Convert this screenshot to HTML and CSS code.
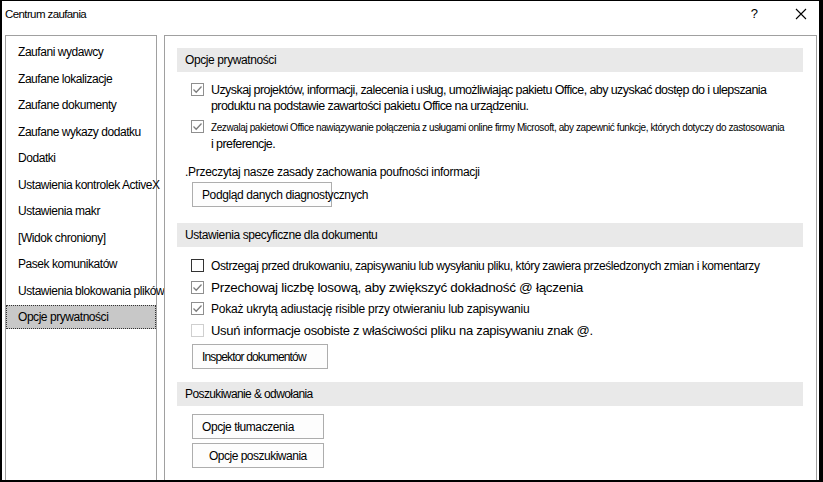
FILE: index.html
```html
<!DOCTYPE html>
<html lang="pl">
<head>
    <meta charset="UTF-8">
    <meta name="viewport" content="width=device-width, initial-scale=1.0">
    <title>Centrum zaufania</title>
    <link rel="stylesheet" href="styles.css">
</head>
<body>
    <div class="window">
        <div class="titlebar">
            <span class="title">Centrum zaufania</span>
            <span class="help">?</span>
            <svg class="close" width="12" height="12" viewBox="0 0 12 12" aria-label="Zamknij">
                <path d="M1 1L11 11M11 1L1 11" stroke="#000" stroke-width="1.1" fill="none"/>
            </svg>
        </div>

        <div class="content">
            <!-- Category list -->
            <ul class="nav">
                <li>Zaufani wydawcy</li>
                <li>Zaufane lokalizacje</li>
                <li>Zaufane dokumenty</li>
                <li>Zaufane wykazy dodatku</li>
                <li>Dodatki</li>
                <li>Ustawienia kontrolek ActiveX</li>
                <li>Ustawienia makr</li>
                <li>[Widok chroniony]</li>
                <li>Pasek komunikatów</li>
                <li>Ustawienia blokowania plików</li>
                <li class="selected">Opcje prywatności</li>
            </ul>

            <!-- Settings pane -->
            <div class="pane">
                <div class="section-title">Opcje prywatności</div>

                <div class="option option-first">
                    <span class="check checked"><svg width="11" height="11" viewBox="0 0 11 11"><path d="M1.5 5.5L4.2 8.2L9.5 2.5" stroke="#7d7d7d" stroke-width="1.3" fill="none"/></svg></span>
                    <span class="option-text">Uzyskaj projektów, informacji, zalecenia i usług, umożliwiając pakietu Office, aby uzyskać dostęp do i ulepszania<br>produktu na podstawie zawartości pakietu Office na urządzeniu.</span>
                </div>
                <div class="option option-second">
                    <span class="check checked"><svg width="11" height="11" viewBox="0 0 11 11"><path d="M1.5 5.5L4.2 8.2L9.5 2.5" stroke="#7d7d7d" stroke-width="1.3" fill="none"/></svg></span>
                    <span class="option-text"><span class="tiny">Zezwalaj pakietowi Office nawiązywanie połączenia z usługami online firmy Microsoft, aby zapewnić funkcje, których dotyczy do zastosowania</span><br>i preferencje.</span>
                </div>

                <p class="privacy-link">.Przeczytaj nasze zasady zachowania poufności informacji</p>
                <button class="btn btn-diag">Podgląd danych diagnostycznych</button>

                <div class="section-title section-doc">Ustawienia specyficzne dla dokumentu</div>

                <div class="row row-first">
                    <span class="check"></span>
                    <span class="row-text warn">Ostrzegaj przed drukowaniu, zapisywaniu lub wysyłaniu pliku, który zawiera prześledzonych zmian i komentarzy</span>
                </div>
                <div class="row">
                    <span class="check checked"><svg width="11" height="11" viewBox="0 0 11 11"><path d="M1.5 5.5L4.2 8.2L9.5 2.5" stroke="#7d7d7d" stroke-width="1.3" fill="none"/></svg></span>
                    <span class="row-text large">Przechowaj liczbę losową, aby zwiększyć dokładność @ łączenia</span>
                </div>
                <div class="row">
                    <span class="check checked"><svg width="11" height="11" viewBox="0 0 11 11"><path d="M1.5 5.5L4.2 8.2L9.5 2.5" stroke="#7d7d7d" stroke-width="1.3" fill="none"/></svg></span>
                    <span class="row-text small">Pokaż ukrytą adiustację risible przy otwieraniu lub zapisywaniu</span>
                </div>
                <div class="row">
                    <span class="check disabled"></span>
                    <span class="row-text">Usuń informacje osobiste z właściwości pliku na zapisywaniu znak @.</span>
                </div>
                <button class="btn btn-inspect">Inspektor dokumentów</button>

                <div class="section-title section-research">Poszukiwanie &amp; odwołania</div>
                <button class="btn btn-translate">Opcje tłumaczenia</button>
                <button class="btn btn-research">Opcje poszukiwania</button>
            </div>
        </div>
    </div>
</body>
</html>
```

FILE: styles.css
```css
body {
    margin: 0;
    padding: 0;
    background-color: #fff;
    font-family: "Liberation Sans", Arial, sans-serif;
    color: #000;
}

/* Dialog frame */
.window {
    box-sizing: border-box;
    width: 823px;
    height: 482px;
    border-style: solid;
    border-color: #000;
    border-width: 1px 4px 2px 2px;
    background-color: #fff;
    overflow: hidden;
}

.titlebar {
    display: flex;
    align-items: flex-start;
    height: 30px;
    padding: 5px 0 0 3px;
    box-sizing: border-box;
    font-size: 11.5px;
    line-height: 16px;
}

.title {
    flex: 1;
    letter-spacing: -0.6px;
}

.help {
    font-size: 13px;
    margin-right: 37px;
}

.close {
    margin: 2px 12px 0 0;
}

.content {
    display: flex;
    gap: 7px;
    padding: 4px 0 0 3px;
}

/* Left category list */
.nav {
    box-sizing: border-box;
    width: 152px;
    height: 460px;
    margin: 0;
    padding: 3px 0 0 0;
    list-style: none;
    border: 1px solid #a0a0a0;
    font-size: 12px;
    letter-spacing: -0.45px;
}

.nav li {
    height: 26.5px;
    line-height: 26.5px;
    padding-left: 12px;
    white-space: nowrap;
}

.nav li.selected {
    height: 24px;
    line-height: 24px;
    margin: 1px 0 1.5px;
    background-color: #c8c8c8;
    outline: 1px dotted #333;
    outline-offset: -1px;
}

/* Right pane */
.pane {
    box-sizing: border-box;
    width: 653px;
    height: 460px;
    padding: 12px 13px 0 12px;
    border: 1px solid #a0a0a0;
}

.section-title {
    height: 24px;
    line-height: 24px;
    padding-left: 8px;
    background-color: #e9e9e9;
    font-size: 12px;
    letter-spacing: -0.4px;
}

.section-doc {
    margin-top: 16px;
}

.section-research {
    margin-top: 13px;
    letter-spacing: -0.6px;
}

.check {
    box-sizing: border-box;
    flex-shrink: 0;
    width: 13px;
    height: 13px;
    border: 1px solid #333;
    background-color: #fff;
}

.check svg {
    display: block;
}

.check.checked {
    border-color: #8f8f8f;
}

.check.disabled {
    border-color: #cfcfcf;
}

.option {
    display: flex;
    align-items: flex-start;
    gap: 7px;
    margin-left: 14px;
}

.option .check {
    margin-top: 1px;
}

.option-first {
    margin-top: 10px;
}

.option-second {
    margin-top: 5px;
}

.option-text {
    font-size: 12.5px;
    line-height: 16px;
    letter-spacing: -0.58px;
    white-space: nowrap;
}

.tiny {
    font-size: 10px;
    letter-spacing: -0.4px;
}

.privacy-link {
    margin: 12px 0 0 8px;
    font-size: 12px;
    line-height: 16px;
    letter-spacing: -0.3px;
}

.row {
    display: flex;
    align-items: center;
    gap: 7px;
    height: 21.5px;
    margin-left: 14px;
}

.row-first {
    margin-top: 8px;
}

.row-text {
    font-size: 13px;
    letter-spacing: -0.3px;
    white-space: nowrap;
}

.row-text.warn {
    font-size: 12px;
    letter-spacing: -0.43px;
}

.row-text.small {
    font-size: 12px;
    letter-spacing: -0.24px;
}

.row-text.large {
    font-size: 13.5px;
    letter-spacing: -0.3px;
}

/* Push buttons */
.btn {
    display: block;
    box-sizing: border-box;
    height: 25px;
    margin-left: 15px;
    padding: 0 0 0 9px;
    border: 1px solid #adadad;
    background-color: #fdfdfd;
    font-family: "Liberation Sans", Arial, sans-serif;
    font-size: 12px;
    letter-spacing: -0.4px;
    color: #000;
    text-align: left;
    white-space: nowrap;
    overflow: visible;
}

.btn-diag {
    width: 140px;
    margin-top: 2px;
}

.btn-inspect {
    width: 136px;
    margin-top: 3px;
    letter-spacing: -0.85px;
}

.btn-translate {
    width: 132px;
    margin-top: 8px;
}

.btn-research {
    width: 132px;
    margin-top: 4px;
    padding-left: 16px;
    letter-spacing: -0.5px;
}
```
